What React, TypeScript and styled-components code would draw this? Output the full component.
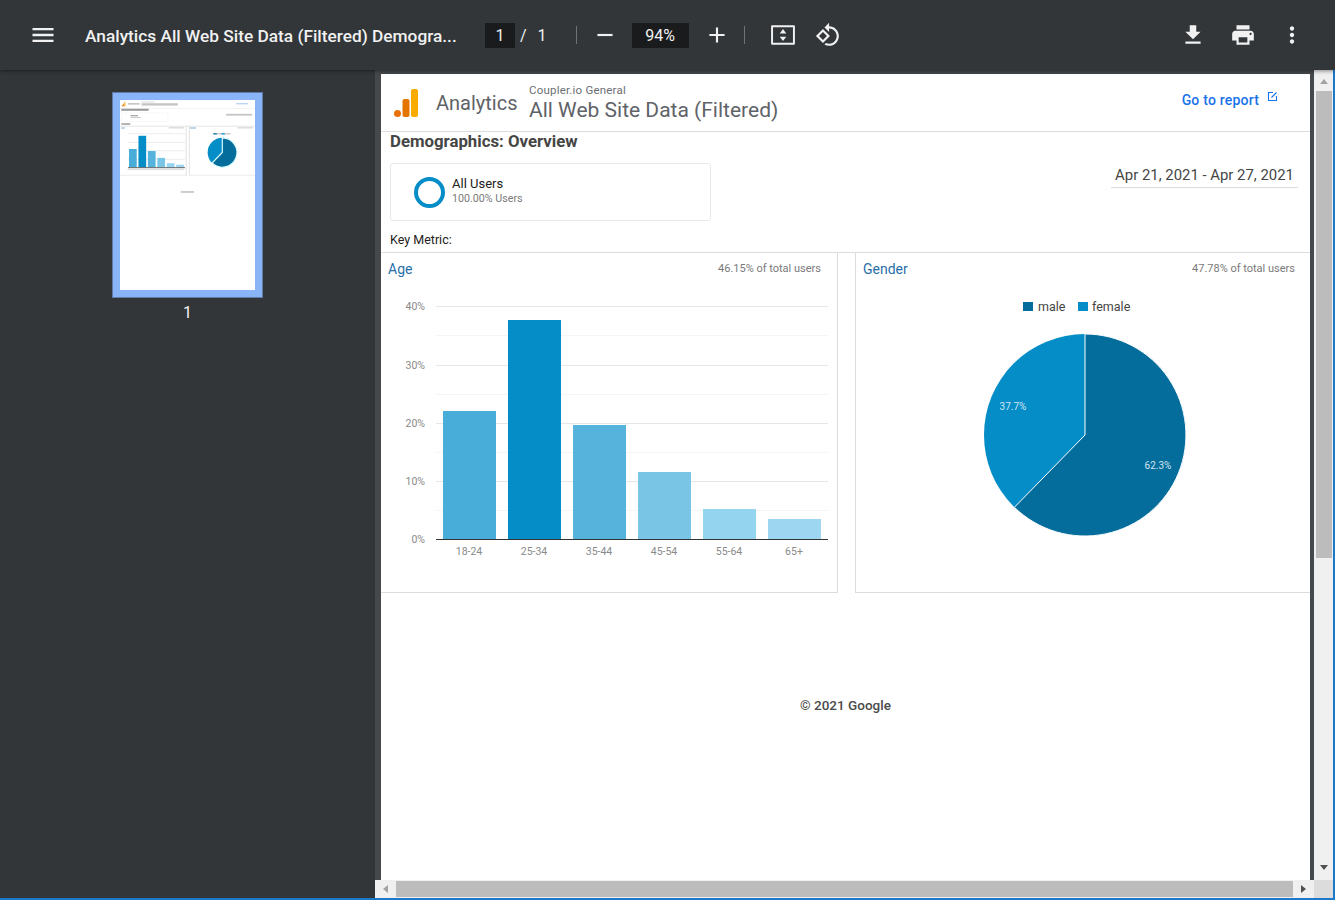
import * as React from "react";
import styled, { createGlobalStyle } from "styled-components";

const GlobalStyle = createGlobalStyle`
  html, body {
    margin: 0;
    padding: 0;
    height: 100%;
    overflow: hidden;
    background: #323639;
    font-family: Roboto, "Liberation Sans", sans-serif;
  }
  * { box-sizing: border-box; }
`;

const Shell = styled.div`
  width: 1335px;
  height: 900px;
  display: flex;
  flex-direction: column;
`;

const Toolbar = styled.header`
  position: relative;
  z-index: 2;
  flex: 0 0 70px;
  display: flex;
  align-items: center;
  background: #323639;
  color: #f1f1f1;
  box-shadow: 0 1px 4px rgba(0, 0, 0, 0.45);
`;

const IconBtn = styled.span<{ $w: number; $ml?: number }>`
  flex: 0 0 ${(p) => p.$w}px;
  margin-left: ${(p) => p.$ml ?? 0}px;
  display: flex;
  align-items: center;
  justify-content: center;
  svg { display: block; fill: #f1f1f1; }
`;

const DocTitle = styled.div`
  flex: 0 0 373px;
  margin: 2px 0 0 28px;
  font-size: 17.3px;
  font-weight: 500;
  white-space: nowrap;
`;

const ValueBox = styled.span<{ $w: number; $ml: number }>`
  flex: 0 0 ${(p) => p.$w}px;
  margin-left: ${(p) => p.$ml}px;
  height: 25px;
  background: #191b1c;
  display: flex;
  align-items: center;
  justify-content: center;
  font-size: 16px;
  font-weight: 400;
`;

const PageCount = styled.span`
  flex: 0 0 auto;
  margin-left: 5px;
  font-size: 16px;
  word-spacing: 7px;
`;

const ToolSep = styled.span<{ $ml: number }>`
  flex: 0 0 1px;
  margin-left: ${(p) => p.$ml}px;
  height: 18px;
  background: #6f7275;
`;

const Body = styled.div`
  flex: 1;
  min-height: 0;
  display: flex;
  border-right: 2px solid #1c78c9;
  border-bottom: 2px solid #1c78c9;
`;

const Sidebar = styled.aside`
  flex: 0 0 375px;
  background: #323639;
  display: flex;
  flex-direction: column;
  align-items: center;
  padding-top: 22px;
`;

const Thumb = styled.div`
  width: 151px;
  height: 206px;
  border: 1px solid #5f7ba5;
  background: #8ab4f8;
  padding: 7px;
  svg { display: block; background: #fff; }
`;

const ThumbLabel = styled.div`
  margin-top: 5px;
  color: #f1f1f1;
  font-size: 16px;
  line-height: 19px;
`;

const ViewerArea = styled.div`
  flex: 1;
  min-width: 0;
  display: flex;
  flex-direction: column;
`;

const ViewerRow = styled.div`
  flex: 1;
  min-height: 0;
  display: flex;
`;

const Canvas = styled.main`
  flex: 1;
  min-width: 0;
  background: #46494c;
  padding: 4px 4px 0 6px;
  overflow: hidden;
`;

const Page = styled.article`
  height: 100%;
  background: #fff;
  color: #333;
`;

const ReportHeader = styled.div`
  height: 58px;
  border-bottom: 1px solid #dcdcdc;
  display: flex;
  align-items: flex-start;
  padding-left: 12px;
`;

const LogoSvg = styled.svg`
  flex: 0 0 26px;
  margin-top: 14px;
`;

const ProductName = styled.div`
  margin: 14px 0 0 17px;
  width: 94px;
  font-size: 20px;
  line-height: 30px;
  color: #5f6368;
`;

const AccountBlock = styled.div`
  flex: 1;
  padding-top: 10px;
  margin-left: -1px;
`;

const AccountName = styled.div`
  font-size: 11.5px;
  line-height: 13px;
  letter-spacing: 0.2px;
  color: #6b6f73;
`;

const ViewName = styled.div`
  font-size: 21px;
  line-height: 26px;
  color: #5f6368;
`;

const ReportLink = styled.a`
  display: flex;
  align-items: flex-start;
  gap: 8px;
  margin: 17px 32px 0 0;
  font-size: 14px;
  line-height: 18px;
  font-weight: 500;
  letter-spacing: 0.2px;
  color: #1a73e8;
  svg { display: block; }
`;

const Heading = styled.h1`
  margin: 0;
  padding: 0 0 0 9px;
  font-size: 16.8px;
  line-height: 19px;
  font-weight: 700;
  color: #454545;
`;

const SegmentRow = styled.div`
  display: flex;
  justify-content: space-between;
  align-items: flex-start;
  padding: 12px 12px 0 9px;
`;

const SegmentCard = styled.div`
  width: 321px;
  height: 58px;
  border: 1px solid #e8e8e8;
  border-radius: 3px;
  display: flex;
  align-items: center;
  padding-left: 23px;
  gap: 7px;
`;

const Ring = styled.span`
  width: 31px;
  height: 31px;
  border: 4px solid #058dc7;
  border-radius: 50%;
`;

const SegmentText = styled.div`
  padding-bottom: 3px;
`;

const SegmentName = styled.div`
  font-size: 13px;
  line-height: 14px;
  color: #222;
`;

const SegmentShare = styled.div`
  margin-top: 1px;
  font-size: 10.7px;
  line-height: 13px;
  color: #7a7a7a;
`;

const DateRange = styled.div`
  width: 187px;
  height: 25px;
  text-align: center;
  border-bottom: 1px solid #dcdcdc;
  font-size: 14.9px;
  line-height: 24px;
  white-space: nowrap;
  color: #454545;
`;

const KeyMetric = styled.div`
  padding: 11px 0 0 9px;
  font-size: 12.5px;
  line-height: 15px;
  color: #222;
`;

const PanelRow = styled.div`
  margin-top: 5px;
  display: flex;
  justify-content: space-between;
  border-top: 1px solid #dcdcdc;
`;

const Panel = styled.section<{ $side: "left" | "right" }>`
  width: ${(p) => (p.$side === "left" ? 457 : 455)}px;
  height: 340px;
  border-bottom: 1px solid #dcdcdc;
  ${(p) => (p.$side === "left" ? "border-right" : "border-left")}: 1px solid #dcdcdc;
`;

const PanelHead = styled.div<{ $pl: number; $pr: number }>`
  height: 30px;
  display: flex;
  justify-content: space-between;
  padding: 8px ${(p) => p.$pr}px 0 ${(p) => p.$pl}px;
`;

const PanelTitle = styled.div`
  font-size: 14px;
  line-height: 17px;
  color: #2a6fa8;
`;

const PanelShare = styled.div`
  margin-top: 1px;
  font-size: 11px;
  line-height: 14px;
  color: #7a7a7a;
`;

const ChartSvg = styled.svg`
  display: block;
`;

const AxisText = styled.text`
  font-family: Roboto, "Liberation Sans", sans-serif;
  font-size: 10.5px;
  fill: #8a8a8a;
`;

const LegendText = styled.text`
  font-family: Roboto, "Liberation Sans", sans-serif;
  font-size: 12.5px;
  fill: #444;
`;

const SliceText = styled.text`
  font-family: Roboto, "Liberation Sans", sans-serif;
  font-size: 10px;
  fill: #cfe6f2;
`;

const Copyright = styled.div`
  margin-top: 104px;
  text-align: center;
  font-size: 13.5px;
  line-height: 16px;
  font-weight: 500;
  color: #4a4a4a;
`;

const VBar = styled.div`
  flex: 0 0 19px;
  background: #f0f0f0;
  display: flex;
  flex-direction: column;
  align-items: center;
  padding-top: 9px;
`;

const VThumb = styled.div`
  width: 16px;
  height: 467px;
  margin-top: 7px;
  background: #bcbcbc;
`;

const Arrow = styled.span<{ $dir: "up" | "down" | "left" | "right"; $dim?: boolean }>`
  flex: 0 0 auto;
  width: 0;
  height: 0;
  border-style: solid;
  ${(p) => {
    const c = p.$dim ? "#a3a3a3" : "#505050";
    if (p.$dir === "up") return `border-width: 0 4.5px 5px; border-color: transparent transparent ${c};`;
    if (p.$dir === "down") return `border-width: 5px 4.5px 0; border-color: ${c} transparent transparent;`;
    if (p.$dir === "left") return `border-width: 4.5px 5px 4.5px 0; border-color: transparent ${c} transparent transparent;`;
    return `border-width: 4.5px 0 4.5px 5px; border-color: transparent transparent transparent ${c};`;
  }}
`;

const DownSlot = styled.div`
  margin-top: auto;
  height: 15px;
  display: flex;
  align-items: flex-start;
`;

const HBar = styled.div`
  flex: 0 0 18px;
  display: flex;
  align-items: center;
  background: #f0f0f0;
`;

const HSlot = styled.div`
  flex: 0 0 21px;
  height: 100%;
  display: flex;
  align-items: center;
  justify-content: center;
`;

const HThumb = styled.div`
  flex: 0 0 897px;
  height: 16px;
  background: #bcbcbc;
`;

const Corner = styled.div`
  margin-left: auto;
  flex: 0 0 19px;
  height: 100%;
  background: #dcdcdc;
`;

const bars = [
  { label: "18-24", x: 443, top: 411, color: "#48add8" },
  { label: "25-34", x: 508, top: 320, color: "#058dc7" },
  { label: "35-44", x: 573, top: 425, color: "#55b3dc" },
  { label: "45-54", x: 638, top: 472, color: "#78c5e6" },
  { label: "55-64", x: 703, top: 509, color: "#94d4ef" },
  { label: "65+", x: 768, top: 519, color: "#9cd6f0" },
];

const majorLines = [
  { label: "40%", y: 306 },
  { label: "30%", y: 365 },
  { label: "20%", y: 423 },
  { label: "10%", y: 481 },
];

const minorLines = [335, 394, 452, 510];

// page coordinates -> svg coordinates of the age chart
const ax = (x: number) => x - 381;
const ay = (y: number) => y - 283;

const AgeChart = () => (
  <ChartSvg width={456} height={300}>
    {minorLines.map((y) => (
      <line key={y} x1={ax(436)} x2={ax(828)} y1={ay(y) + 0.5} y2={ay(y) + 0.5} stroke="#f5f5f5" />
    ))}
    {majorLines.map((l) => (
      <line key={l.y} x1={ax(436)} x2={ax(828)} y1={ay(l.y) + 0.5} y2={ay(l.y) + 0.5} stroke="#e6e6e6" />
    ))}
    {[...majorLines, { label: "0%", y: 539 }].map((l) => (
      <AxisText key={l.label} x={ax(425)} y={ay(l.y) + 4} textAnchor="end">
        {l.label}
      </AxisText>
    ))}
    {bars.map((b) => (
      <rect key={b.label} x={ax(b.x)} y={ay(b.top)} width={53} height={539 - b.top} fill={b.color} />
    ))}
    <line x1={ax(436)} x2={ax(828)} y1={ay(539) + 0.5} y2={ay(539) + 0.5} stroke="#333" />
    {bars.map((b) => (
      <AxisText key={b.label} x={ax(b.x + 26)} y={ay(555)} textAnchor="middle">
        {b.label}
      </AxisText>
    ))}
  </ChartSvg>
);

const GenderChart = () => (
  <ChartSvg width={453} height={300}>
    <rect x={167} y={19} width={10} height={9} fill="#056d9b" />
    <LegendText x={182} y={28}>male</LegendText>
    <rect x={222} y={19} width={10} height={9} fill="#058dc7" />
    <LegendText x={236} y={28}>female</LegendText>
    <circle cx={229} cy={152} r={101} fill="#058dc7" />
    <path d="M229 152 V51 A101 101 0 1 1 158.4 224.3 Z" fill="#056d9b" stroke="#fff" strokeWidth={1} />
    <SliceText x={157} y={127} textAnchor="middle">37.7%</SliceText>
    <SliceText x={302} y={186} textAnchor="middle">62.3%</SliceText>
  </ChartSvg>
);

// the same page drawn in page pixels, without readable text
const MiniPage = () => (
  <svg width={135} height={190} viewBox="0 0 929 1307">
    <rect x={13} y={35} width={7} height={8} fill="#e8710a" />
    <rect x={22} y={25} width={7} height={18} fill="#e37400" />
    <rect x={30} y={14} width={7} height={29} fill="#f9ab00" />
    <rect x={55} y={20} width={80} height={12} fill="#c8c8c8" />
    <rect x={148} y={10} width={90} height={6} fill="#d8d8d8" />
    <rect x={148} y={22} width={250} height={16} fill="#c4c4c4" />
    <rect x={800} y={20} width={80} height={10} fill="#bcd4f5" />
    <rect x={0} y={57} width={929} height={3} fill="#e4e4e4" />
    <rect x={9} y={60} width={188} height={14} fill="#999" />
    <rect x={9} y={89} width={321} height={58} fill="none" stroke="#eee" strokeWidth={3} />
    <rect x={72} y={103} width={52} height={9} fill="#aaa" />
    <rect x={72} y={117} width={70} height={7} fill="#ccc" />
    <rect x={730} y={95} width={180} height={12} fill="#c4c4c4" />
    <rect x={9} y={160} width={62} height={10} fill="#999" />
    <rect x={0} y={177} width={929} height={6} fill="#e2e2e2" />
    <rect x={452} y={177} width={7} height={342} fill="#e2e2e2" />
    <rect x={474} y={177} width={7} height={342} fill="#e2e2e2" />
    <rect x={0} y={514} width={459} height={6} fill="#e8e8e8" />
    <rect x={474} y={514} width={455} height={6} fill="#e8e8e8" />
    <rect x={8} y={188} width={25} height={9} fill="#9bc0dc" />
    <rect x={335} y={188} width={105} height={7} fill="#ccc" />
    <rect x={482} y={188} width={40} height={9} fill="#9bc0dc" />
    <rect x={810} y={188} width={105} height={7} fill="#ccc" />
    {[232, 291, 349, 407].map((y) => (
      <rect key={y} x={55} y={y - 2} width={392} height={5} fill="#e6e6e6" />
    ))}
    {bars.map((b) => (
      <rect key={b.label} x={b.x - 381} y={b.top - 74} width={53} height={539 - b.top} fill={b.color} />
    ))}
    <rect x={55} y={462} width={392} height={7} fill="#666" />
    <rect x={50} y={475} width={390} height={7} fill="#ddd" />
    <rect x={642} y={228} width={25} height={9} fill="#056d9b" />
    <rect x={668} y={228} width={28} height={9} fill="#c4c4c4" />
    <rect x={697} y={228} width={25} height={9} fill="#058dc7" />
    <rect x={723} y={228} width={38} height={9} fill="#c4c4c4" />
    <circle cx={704} cy={361} r={101} fill="#058dc7" />
    <path d="M704 361 V260 A101 101 0 1 1 633.4 433.3 Z" fill="#056d9b" stroke="#dff" strokeWidth={8} />
    <rect x={418} y={626} width={92} height={13} fill="#ccc" />
  </svg>
);

const App = () => (
  <Shell>
    <GlobalStyle />
    <Toolbar>
      <IconBtn $w={29} $ml={28}>
        <svg width={28} height={28} viewBox="0 0 24 24">
          <path d="M3 18h18v-2H3v2zm0-5h18v-2H3v2zm0-7v2h18V6H3z" />
        </svg>
      </IconBtn>
      <DocTitle>Analytics All Web Site Data (Filtered) Demogra...</DocTitle>
      <ValueBox $w={30} $ml={27}>1</ValueBox>
      <PageCount>/ 1</PageCount>
      <ToolSep $ml={29} />
      <IconBtn $w={26} $ml={15}>
        <svg width={26} height={26} viewBox="0 0 24 24">
          <path d="M5 11h14v2H5z" />
        </svg>
      </IconBtn>
      <ValueBox $w={57} $ml={14}>94%</ValueBox>
      <IconBtn $w={26} $ml={15}>
        <svg width={26} height={26} viewBox="0 0 24 24">
          <path d="M19 13h-6v6h-2v-6H5v-2h6V5h2v6h6v2z" />
        </svg>
      </IconBtn>
      <ToolSep $ml={14} />
      <IconBtn $w={26} $ml={25}>
        <svg width={26} height={26} viewBox="0 0 24 24">
          <path d="M2 3h20a1 1 0 0 1 1 1v16a1 1 0 0 1-1 1H2a1 1 0 0 1-1-1V4a1 1 0 0 1 1-1zm.8 1.8v14.4h18.4V4.8H2.8zM12 6.5l3 4H9l3-4zm0 11l-3-4h6l-3 4z" />
        </svg>
      </IconBtn>
      <IconBtn $w={26} $ml={19}>
        <svg width={26} height={26} viewBox="0 0 24 24">
          <path d="M7.34 6.41L.86 12.9l6.49 6.48 6.49-6.48-6.5-6.49zM3.69 12.9l3.66-3.66L11 12.9l-3.66 3.66-3.65-3.66zm15.67-6.26C17.61 4.88 15.3 4 13 4V.76L8.76 5 13 9.24V6c1.79 0 3.58.68 4.95 2.05 2.73 2.73 2.73 7.17 0 9.9C16.58 19.32 14.79 20 13 20c-.97 0-1.94-.21-2.84-.61l-1.49 1.49C10.02 21.62 11.51 22 13 22c2.3 0 4.61-.88 6.36-2.64 3.52-3.51 3.52-9.21 0-12.72z" />
        </svg>
      </IconBtn>
      <IconBtn $w={26} $ml={339}>
        <svg width={26} height={26} viewBox="0 0 24 24">
          <path d="M19 9h-4V3H9v6H5l7 7 7-7zM5 18v2h14v-2H5z" />
        </svg>
      </IconBtn>
      <IconBtn $w={26} $ml={24}>
        <svg width={26} height={26} viewBox="0 0 24 24">
          <path d="M19 8H5c-1.66 0-3 1.34-3 3v6h4v4h12v-4h4v-6c0-1.66-1.34-3-3-3zm-3 11H8v-5h8v5zm3-7c-.55 0-1-.45-1-1s.45-1 1-1 1 .45 1 1-.45 1-1 1zm-1-9H6v4h12V3z" />
        </svg>
      </IconBtn>
      <IconBtn $w={26} $ml={23}>
        <svg width={26} height={26} viewBox="0 0 24 24">
          <path d="M12 8c1.1 0 2-.9 2-2s-.9-2-2-2-2 .9-2 2 .9 2 2 2zm0 2c-1.1 0-2 .9-2 2s.9 2 2 2 2-.9 2-2-.9-2-2-2zm0 6c-1.1 0-2 .9-2 2s.9 2 2 2 2-.9 2-2-.9-2-2-2z" />
        </svg>
      </IconBtn>
    </Toolbar>
    <Body>
      <Sidebar>
        <Thumb>
          <MiniPage />
        </Thumb>
        <ThumbLabel>1</ThumbLabel>
      </Sidebar>
      <ViewerArea>
        <ViewerRow>
          <Canvas>
            <Page>
              <ReportHeader>
                <LogoSvg width={26} height={30} viewBox="0 0 26 30">
                  <circle cx={4.5} cy={25.5} r={3.5} fill="#e8710a" />
                  <rect x={9.5} y={11} width={7} height={18} rx={2} fill="#e37400" />
                  <rect x={18} y={1} width={7} height={28} rx={2} fill="#f9ab00" />
                </LogoSvg>
                <ProductName>Analytics</ProductName>
                <AccountBlock>
                  <AccountName>Coupler.io General</AccountName>
                  <ViewName>All Web Site Data (Filtered)</ViewName>
                </AccountBlock>
                <ReportLink>
                  Go to report
                  <svg width={11} height={11} viewBox="0 0 11 11" fill="none" stroke="#1a73e8">
                    <path d="M6 1.5H1.5v8h8V5M4.5 6.5 9.5 1.5" strokeWidth={1.1} />
                  </svg>
                </ReportLink>
              </ReportHeader>
              <Heading>Demographics: Overview</Heading>
              <SegmentRow>
                <SegmentCard>
                  <Ring />
                  <SegmentText>
                    <SegmentName>All Users</SegmentName>
                    <SegmentShare>100.00% Users</SegmentShare>
                  </SegmentText>
                </SegmentCard>
                <DateRange>Apr 21, 2021 - Apr 27, 2021</DateRange>
              </SegmentRow>
              <KeyMetric>Key Metric:</KeyMetric>
              <PanelRow>
                <Panel $side="left">
                  <PanelHead $pl={7} $pr={16}>
                    <PanelTitle>Age</PanelTitle>
                    <PanelShare>46.15% of total users</PanelShare>
                  </PanelHead>
                  <AgeChart />
                </Panel>
                <Panel $side="right">
                  <PanelHead $pl={7} $pr={15}>
                    <PanelTitle>Gender</PanelTitle>
                    <PanelShare>47.78% of total users</PanelShare>
                  </PanelHead>
                  <GenderChart />
                </Panel>
              </PanelRow>
              <Copyright>© 2021 Google</Copyright>
            </Page>
          </Canvas>
          <VBar>
            <Arrow $dir="up" $dim />
            <VThumb />
            <DownSlot>
              <Arrow $dir="down" />
            </DownSlot>
          </VBar>
        </ViewerRow>
        <HBar>
          <HSlot>
            <Arrow $dir="left" $dim />
          </HSlot>
          <HThumb />
          <HSlot>
            <Arrow $dir="right" />
          </HSlot>
          <Corner />
        </HBar>
      </ViewerArea>
    </Body>
  </Shell>
);

export default App;
